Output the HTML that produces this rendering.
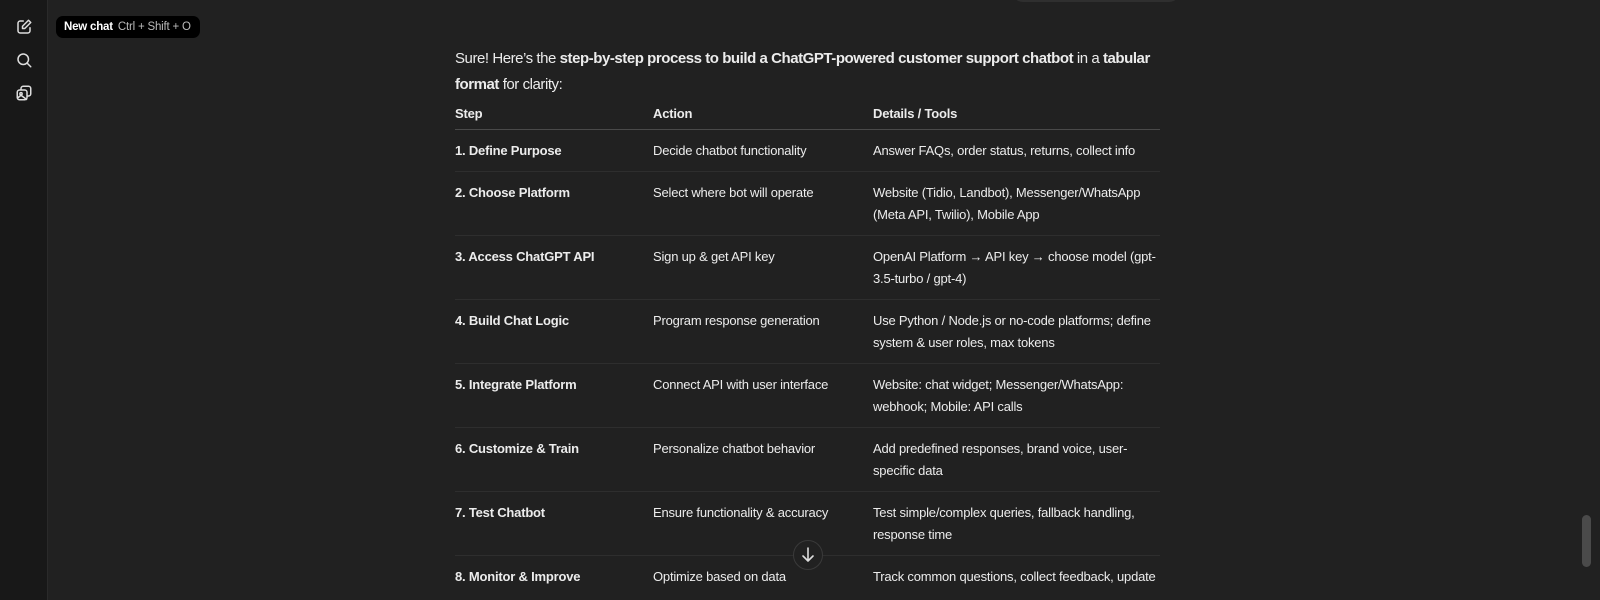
<!DOCTYPE html>
<html><head><meta charset="utf-8"><style>
*{margin:0;padding:0;box-sizing:border-box}
body{width:1600px;height:600px;background:#212121;overflow:hidden;position:relative;font-family:"Liberation Sans",Arial,sans-serif;color:#ececec}
.side{position:absolute;left:0;top:0;width:48px;height:600px;background:#181818;border-right:1px solid #2a2a2a}
.side svg{position:absolute;left:15px;width:18px;height:18px}
.tip{position:absolute;left:56px;top:16px;height:22px;background:#000;border-radius:7px;padding:0 9px 0 8px;font-size:11.5px;line-height:22px;color:#fff;font-weight:bold;letter-spacing:-0.2px}
.tip span{font-weight:normal;color:#bbb;margin-left:5px}
.topbox{position:absolute;left:1012px;top:-20px;width:168px;height:22px;background:#2f2f2f;border-radius:12px}
.p{position:absolute;left:455px;top:46px;width:720px;font-size:15px;line-height:26px;letter-spacing:-0.45px}
table{position:absolute;left:455px;top:99px;width:705px;border-collapse:collapse;font-size:13px;line-height:22px;letter-spacing:-0.2px}
th{text-align:left;font-weight:bold;padding:4px 0 4px;border-bottom:1px solid #4a4a4a}
td{padding:10px 0 9px;vertical-align:top;border-bottom:1px solid #2e2e2e}
tr:last-child td{border-bottom:none}
td:first-child{font-weight:bold}
.c1{width:198px}.c2{width:220px}
.down{position:absolute;left:793px;top:540px;width:30px;height:30px;border-radius:50%;border:1px solid #3a3a3a;background:#212121}
.scroll{position:absolute;left:1582px;top:515px;width:9px;height:52px;border-radius:5px;background:#4a4a4a}
</style></head><body>
<div class="side">
<svg style="top:18px" viewBox="0 0 24 24" fill="none" stroke="#ddd" stroke-width="2" stroke-linecap="round" stroke-linejoin="round"><path d="M11 4H7a3 3 0 0 0-3 3v10a3 3 0 0 0 3 3h10a3 3 0 0 0 3-3v-4"/><path d="M18 3l3 3-8 8H10v-3z"/></svg>
<svg style="top:51px" viewBox="0 0 24 24" fill="none" stroke="#ddd" stroke-width="2" stroke-linecap="round"><circle cx="11" cy="11" r="7"/><path d="M16 16l5 5"/></svg>
<svg style="top:84px" viewBox="0 0 24 24" fill="none" stroke="#ddd" stroke-width="2" stroke-linejoin="round"><rect x="3" y="8" width="13" height="13" rx="3"/><path d="M8 8V6a3 3 0 0 1 3-3h7a3 3 0 0 1 3 3v7a3 3 0 0 1-3 3h-2"/><circle cx="8" cy="13" r="1.5"/><path d="M3 19l5-4 8 6"/></svg>
</div>
<div class="tip">New chat<span>Ctrl + Shift + O</span></div>
<div class="topbox"></div>
<div class="p">Sure! Here’s the <b>step-by-step process to build a ChatGPT-powered customer support chatbot</b> in a <b>tabular format</b> for clarity:</div>
<table>
<tr><th class="c1">Step</th><th class="c2">Action</th><th>Details / Tools</th></tr>
<tr><td>1. Define Purpose</td><td>Decide chatbot functionality</td><td>Answer FAQs, order status, returns, collect info</td></tr>
<tr><td>2. Choose Platform</td><td>Select where bot will operate</td><td>Website (Tidio, Landbot), Messenger/WhatsApp<br>(Meta API, Twilio), Mobile App</td></tr>
<tr><td>3. Access ChatGPT API</td><td>Sign up &amp; get API key</td><td>OpenAI Platform → API key → choose model (gpt-<br>3.5-turbo / gpt-4)</td></tr>
<tr><td>4. Build Chat Logic</td><td>Program response generation</td><td>Use Python / Node.js or no-code platforms; define<br>system &amp; user roles, max tokens</td></tr>
<tr><td>5. Integrate Platform</td><td>Connect API with user interface</td><td>Website: chat widget; Messenger/WhatsApp:<br>webhook; Mobile: API calls</td></tr>
<tr><td>6. Customize &amp; Train</td><td>Personalize chatbot behavior</td><td>Add predefined responses, brand voice, user-<br>specific data</td></tr>
<tr><td>7. Test Chatbot</td><td>Ensure functionality &amp; accuracy</td><td>Test simple/complex queries, fallback handling,<br>response time</td></tr>
<tr><td>8. Monitor &amp; Improve</td><td>Optimize based on data</td><td>Track common questions, collect feedback, update</td></tr>
</table>
<div class="down"><svg width="28" height="28" viewBox="0 0 28 28" fill="none" stroke="#ddd" stroke-width="1.6" stroke-linecap="round" stroke-linejoin="round"><path d="M14 7v13M9 15l5 5 5-5"/></svg></div>
<div class="scroll"></div>
</body></html>
